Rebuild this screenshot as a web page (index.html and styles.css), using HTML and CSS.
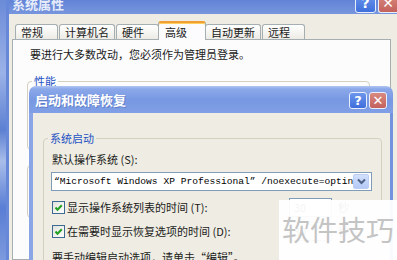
FILE: index.html
```html
<!DOCTYPE html>
<html lang="zh-CN">
<head>
  <meta charset="UTF-8">
  <title>系统属性</title>
  <link rel="stylesheet" href="styles.css">
</head>
<body>

  <div class="desktop"></div>

  <!-- outer window: 系统属性 -->
  <div class="window">
    <div class="titlebar">
      <span class="title">系统属性</span>
      <span class="title-btns">
        <span class="tbtn help">?</span>
        <span class="tbtn close">✕</span>
      </span>
    </div>
    <div class="window-body">
      <div class="tabs">
        <div class="tab">常规</div>
        <div class="tab">计算机名</div>
        <div class="tab">硬件</div>
        <div class="tab active">高级</div>
        <div class="tab">自动更新</div>
        <div class="tab">远程</div>
      </div>
      <div class="tab-panel">
        <p class="note">要进行大多数改动，您必须作为管理员登录。</p>
        <fieldset class="group perf"><legend>性能</legend></fieldset>
        <fieldset class="group profiles"><legend>用户配置文件</legend></fieldset>
      </div>
    </div>
  </div>

  <!-- dialog on top: 启动和故障恢复 -->
  <div class="dialog">
    <div class="dialog-title">
      <span class="title">启动和故障恢复</span>
      <span class="title-btns">
        <span class="tbtn help">?</span>
        <span class="tbtn close">✕</span>
      </span>
    </div>
    <div class="dialog-body">
      <fieldset class="group boot">
        <legend>系统启动</legend>
        <div class="field-label">默认操作系统 (S):</div>
        <div class="select">
          <span class="select-text">“Microsoft Windows XP Professional” /noexecute=optin</span>
          <span class="select-arrow">
            <svg width="9" height="7" viewBox="0 0 9 7"><path d="M1 1.5 L4.5 5 L8 1.5" fill="none" stroke="#4d6185" stroke-width="2"/></svg>
          </span>
        </div>
        <div class="check-row">
          <span class="checkbox">
            <svg width="11" height="11" viewBox="0 0 11 11"><path d="M2.5 5.5 L4.5 7.7 L8.8 3.2" fill="none" stroke="#21a121" stroke-width="2"/></svg>
          </span>
          <span class="check-text">显示操作系统列表的时间 (T):</span>
          <span class="spin">30</span>
          <span class="unit">秒</span>
        </div>
        <div class="check-row">
          <span class="checkbox">
            <svg width="11" height="11" viewBox="0 0 11 11"><path d="M2.5 5.5 L4.5 7.7 L8.8 3.2" fill="none" stroke="#21a121" stroke-width="2"/></svg>
          </span>
          <span class="check-text">在需要时显示恢复选项的时间 (D):</span>
          <span class="spin">30</span>
          <span class="unit">秒</span>
        </div>
        <p class="hint">要手动编辑启动选项，请单击“编辑”。</p>
      </fieldset>
    </div>
  </div>

  <div class="watermark">软件技巧</div>

</body>
</html>
```

FILE: styles.css
```css
* {
  box-sizing: border-box;
}

body {
  margin: 0;
  width: 397px;
  height: 260px;
  overflow: hidden;
  position: relative;
  display: flex;
  font-family: "Noto Sans CJK SC", "DejaVu Sans", sans-serif;
  font-size: 11px;
  color: #1a1a1a;
  background: #5a7ed4;
}

.desktop {
  width: 6px;
  background: linear-gradient(180deg, #6b8bd8, #9cb3e8 28%, #5d80d2 50%, #a9bdea 62%, #5a7ed4 80%, #7d9ade);
}

/* ---------- outer window ---------- */

.window {
  flex: 1;
  display: flex;
  flex-direction: column;
  border-left: 3px solid #6788d8;
  background: #efede3;
}

.titlebar {
  flex-shrink: 0;
  height: 14px;
  display: flex;
  align-items: flex-end;
  justify-content: space-between;
  overflow: hidden;
  background: linear-gradient(180deg, #6283d6, #7896dd);
}

.titlebar .title {
  padding-left: 3px;
  margin-bottom: 2px;
  font-size: 13px;
  line-height: 16px;
  font-weight: bold;
  color: #e6ecfa;
}

.title-btns {
  display: flex;
  gap: 2px;
}

.titlebar .title-btns {
  margin-bottom: 1px;
}

.tbtn {
  display: flex;
  align-items: center;
  justify-content: center;
  border: 1px solid #e9eefb;
  border-radius: 3px;
  color: #fff;
  font-family: "DejaVu Sans", sans-serif;
  font-weight: bold;
}

.titlebar .tbtn {
  height: 20px;
  width: 21px;
  font-size: 14px;
}

.titlebar .tbtn.close {
  width: 19px;
  border-right: none;
  border-radius: 3px 0 0 3px;
}

.tbtn.help {
  background: linear-gradient(180deg, #6c95ec, #3f6fdc);
}

.tbtn.close {
  background: linear-gradient(180deg, #d98a80, #c3625c);
}

.window-body {
  flex: 1;
  display: flex;
  flex-direction: column;
  padding: 7px 6px 0 3px;
}

.tabs {
  display: flex;
  align-items: flex-end;
  padding-left: 3px;
  position: relative;
  z-index: 1;
}

.tab {
  height: 15px;
  min-width: 43px;
  padding: 0 5px;
  margin-right: 1px;
  border: 1px solid #a5aeb0;
  border-bottom: none;
  border-radius: 3px 3px 0 0;
  background: linear-gradient(180deg, #ffffff, #ecebe5);
  line-height: 14px;
  white-space: nowrap;
}

.tab.active {
  height: 19px;
  min-width: 48px;
  margin: 0 -1px -1px -2px;
  padding: 2px 6px 0;
  border-top: 2px solid #ef9f35;
  box-shadow: inset 0 1px 0 #ffcf5e;
  background: #fcfcfe;
  line-height: 15px;
}

.tab-panel {
  flex: 1;
  padding: 7px 20px 0 14px;
  border: 1px solid #a5aeb0;
  background: #fcfcfd;
}

.note {
  margin: 0 0 0 3px;
  line-height: 14px;
}

/* ---------- group boxes ---------- */

.group {
  margin: 0;
  padding: 0 8px;
  min-width: 0;
  border: 1px solid #d3d0bf;
  border-radius: 4px;
}

.group legend {
  padding: 0 2px;
  margin-left: -4px;
  line-height: 14px;
  color: #2451c4;
}

.perf {
  margin-top: 13px;
  height: 76px;
}

.profiles {
  margin-top: 8px;
  height: 60px;
}

/* ---------- dialog ---------- */

.dialog {
  position: absolute;
  left: 29px;
  top: 86px;
  width: 364px;
  display: flex;
  flex-direction: column;
}

.dialog-title {
  flex-shrink: 0;
  height: 27px;
  display: flex;
  align-items: center;
  justify-content: space-between;
  padding: 0 6px;
  border-radius: 7px 7px 0 0;
  background: linear-gradient(180deg, #afc4f2 0, #8ba8e9 3px, #7798e2 14px, #809fe5 100%);
}

.dialog-title .title {
  font-size: 13px;
  font-weight: bold;
  color: #fff;
  text-shadow: 1px 1px 0 rgba(40, 70, 150, 0.35);
}

.dialog-title .tbtn {
  width: 18px;
  height: 17px;
  margin-top: 1px;
  font-size: 13px;
}

.dialog-body {
  padding: 18px 8px 10px 10px;
  background: #efede3;
  border-left: 4px solid #89a5e6;
  border-right: 3px solid #7493de;
}

.boot {
  padding-top: 7px;
  padding-bottom: 20px;
}

.field-label {
  line-height: 14px;
}

.select {
  display: flex;
  align-items: center;
  height: 19px;
  margin: 6px 1px 0 -1px;
  padding: 0 2px 0 2px;
  border: 1px solid #7f9db9;
  background: #fff;
}

.select-text {
  flex: 1;
  overflow: hidden;
  white-space: nowrap;
  font-family: "Liberation Mono", monospace;
  font-size: 9.6px;
  color: #000;
}

.select-arrow {
  width: 16px;
  height: 15px;
  display: flex;
  align-items: center;
  justify-content: center;
  border: 1px solid #bccdf3;
  border-radius: 2px;
  background: linear-gradient(180deg, #d3e0fd, #b4c9f6);
}

.check-row {
  display: flex;
  align-items: center;
  height: 14px;
  margin-top: 9px;
}

.check-row + .check-row {
  margin-top: 10px;
}

.checkbox {
  width: 13px;
  height: 13px;
  display: flex;
  align-items: center;
  justify-content: center;
  border: 1px solid #3d6a93;
  background: linear-gradient(135deg, #e2e2dc, #ffffff);
}

.check-text {
  margin-left: 2px;
  flex: 1;
  white-space: nowrap;
}

.spin {
  width: 43px;
  height: 19px;
  padding: 2px 4px;
  border: 1px solid #7f9db9;
  background: #fff;
  line-height: 13px;
}

.unit {
  margin: 0 24px 0 6px;
}

.hint {
  margin: 12px 0 0;
  line-height: 14px;
  white-space: nowrap;
}

/* ---------- watermark ---------- */

.watermark {
  position: absolute;
  left: 279px;
  top: 200px;
  width: 118px;
  height: 60px;
  padding: 15px 0 0 3px;
  background: rgba(255, 255, 255, 0.95);
  color: #c4c4c4;
  font-size: 28px;
  line-height: 28px;
  white-space: nowrap;
}
```
